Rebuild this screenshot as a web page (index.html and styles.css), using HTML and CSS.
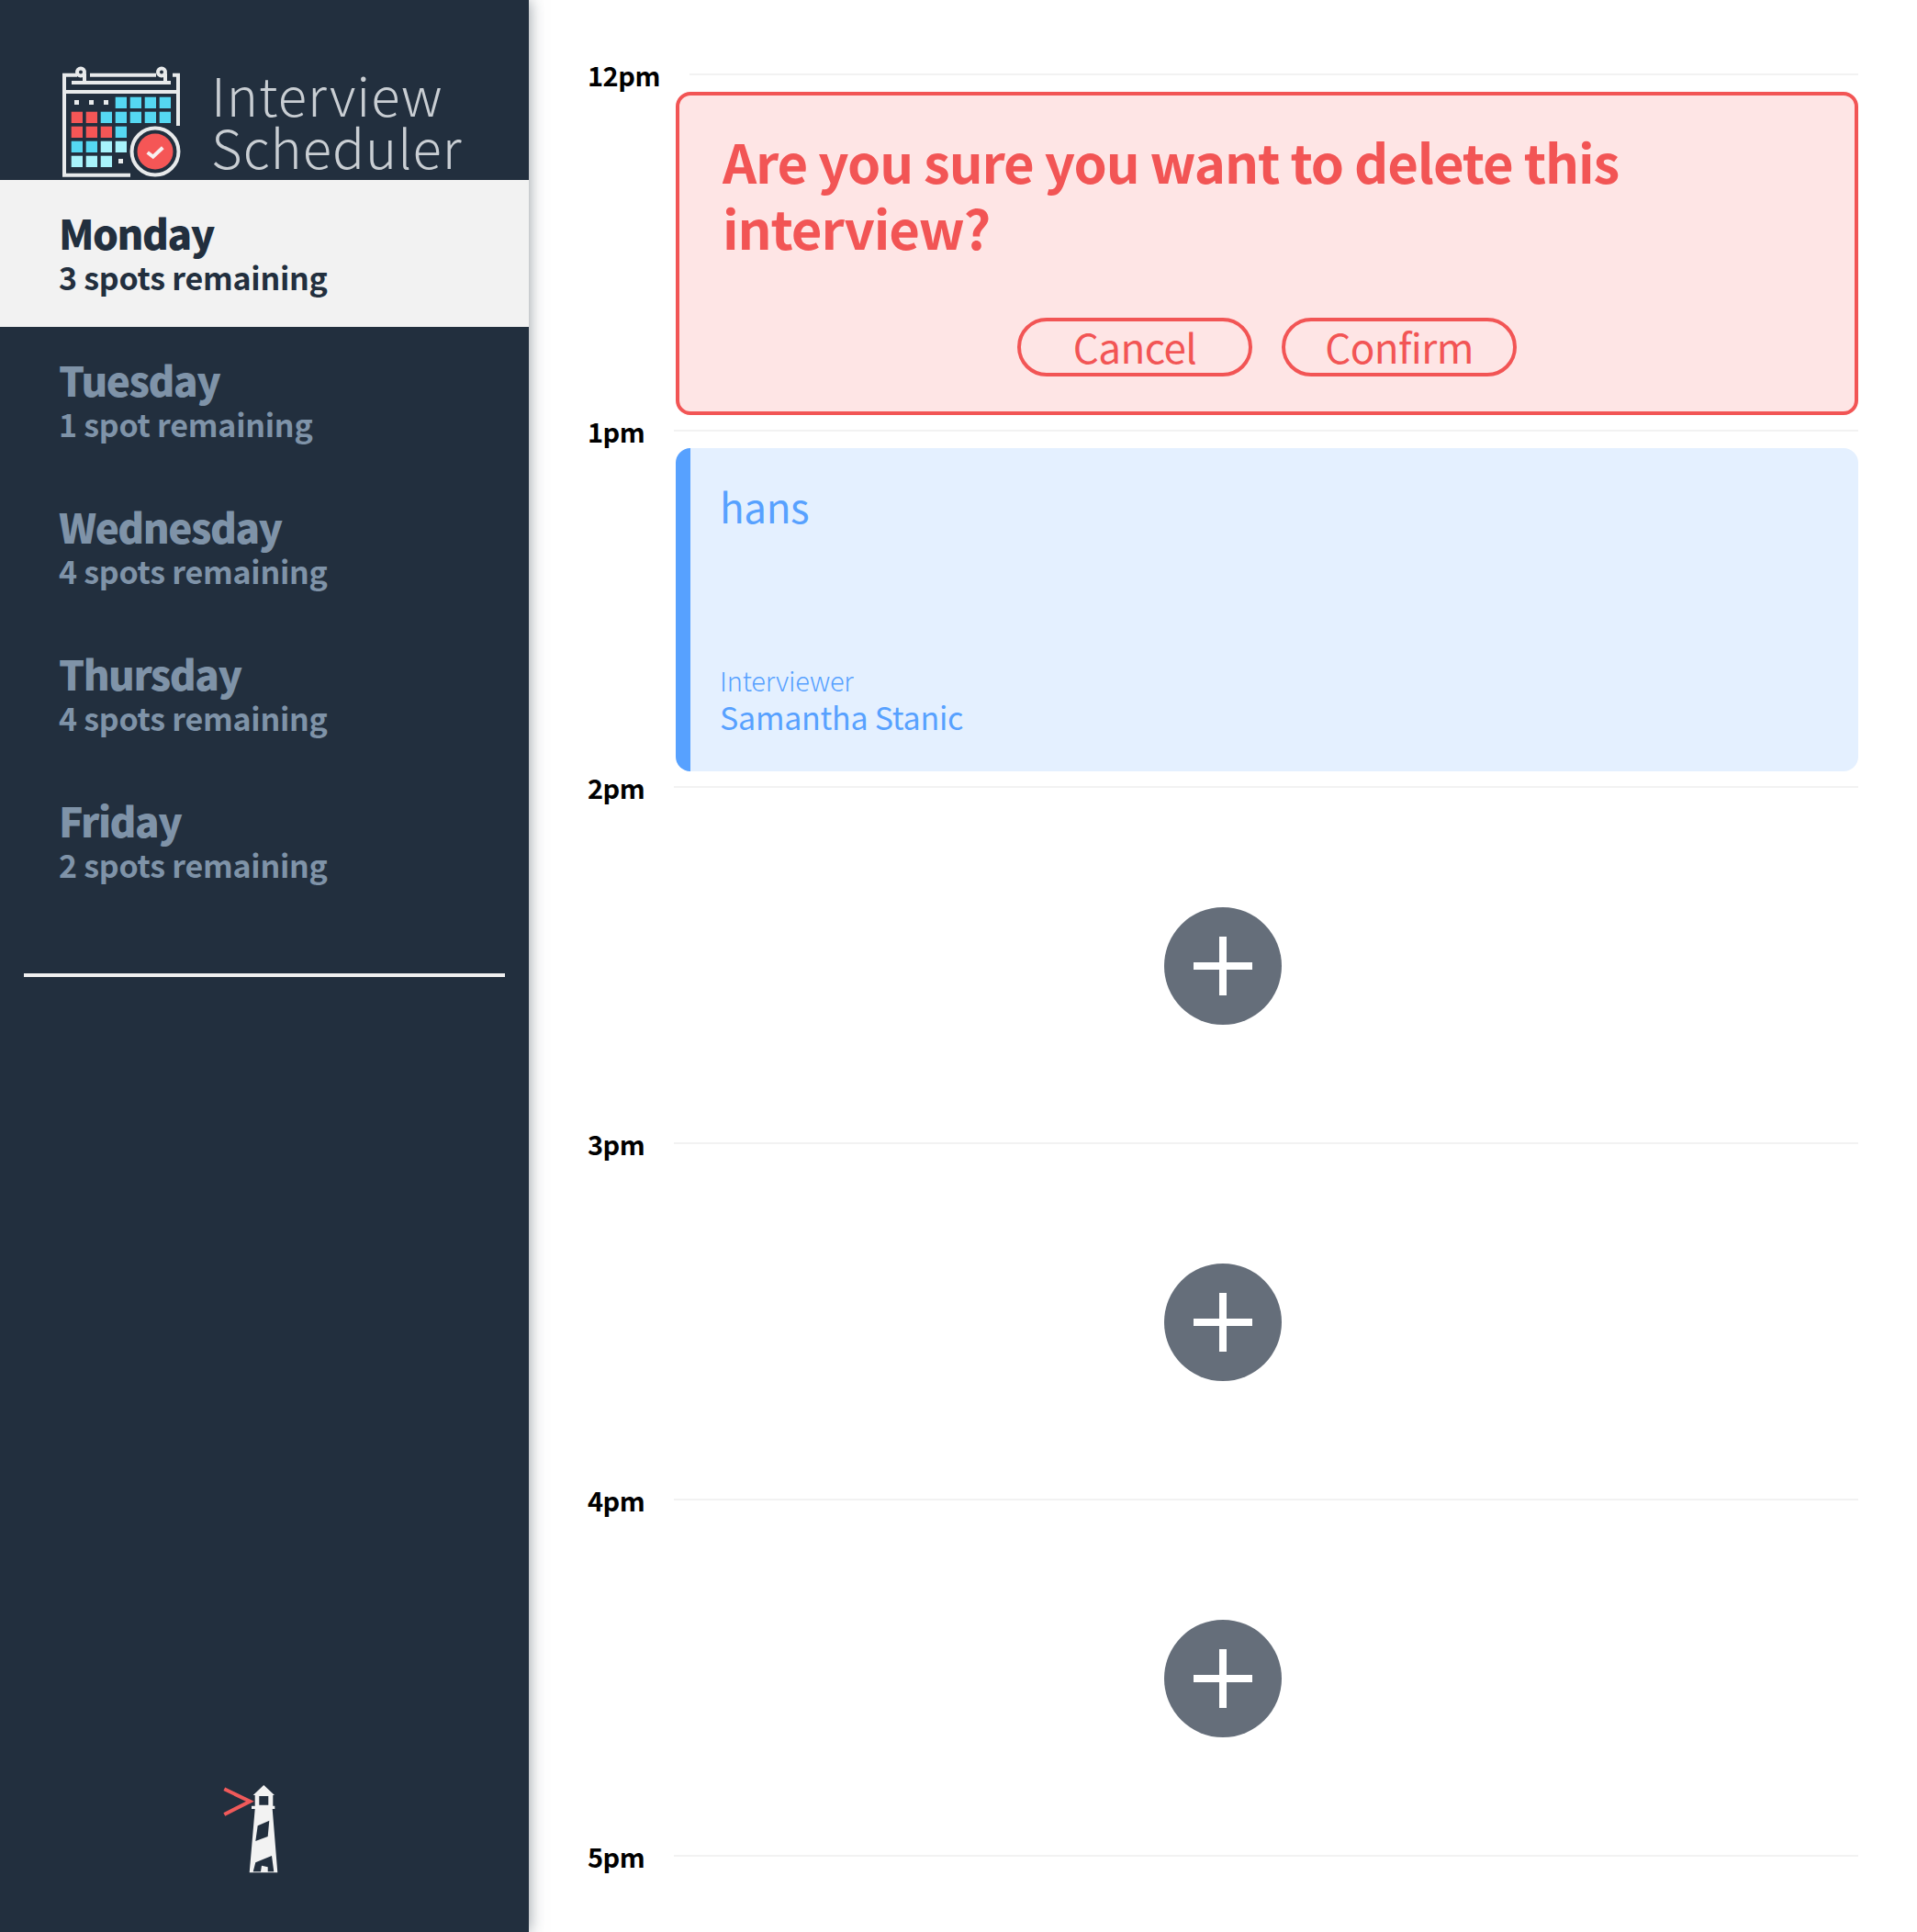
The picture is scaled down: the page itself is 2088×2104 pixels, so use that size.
FILE: index.html
```html
<!DOCTYPE html>
<html lang="en">
<head>
  <meta charset="UTF-8" />
  <meta name="viewport" content="width=device-width, initial-scale=1.0"/>
  <title>Interview Scheduler</title>
  <link rel="stylesheet" href="styles.css">
</head>
<body>
  <div class="layout">
    <aside class="sidebar">
      <div class="brand">
        <svg class="brand-icon" width="140" height="130" viewBox="0 0 140 130">
          <g fill="none" stroke="#e8eaeb" stroke-width="4">
            <path d="M24 11.7H10V120.7H82"/>
            <path d="M10 30H134"/>
            <path d="M128 11.7H134V67"/>
            <path d="M38 11.7H110"/>
            <path d="M18 20H126"/>
            <circle cx="28" cy="8.500" r="4"/>
            <circle cx="116" cy="8.500" r="4"/>
            <path d="M32 10V20M120 10V20"/>
            <circle cx="109" cy="95" r="25.5"/>
          </g>
          <g fill="#e8eaeb">
            <rect x="21" y="39" width="5" height="5"/>
            <rect x="37" y="39" width="5" height="5"/>
            <rect x="53" y="39" width="5" height="5"/>
            <rect x="69" y="103" width="5" height="5"/>
          </g>
          <g fill="#55d8f2">
            <rect x="65.700" y="35.700" width="12.300" height="12.300"/>
            <rect x="81.700" y="35.700" width="12.300" height="12.300"/>
            <rect x="97.700" y="35.700" width="12.300" height="12.300"/>
            <rect x="113.700" y="35.700" width="12.300" height="12.300"/>
            <rect x="49.700" y="51.700" width="12.300" height="12.300"/>
            <rect x="65.700" y="51.700" width="12.300" height="12.300"/>
            <rect x="81.700" y="51.700" width="12.300" height="12.300"/>
            <rect x="97.700" y="51.700" width="12.300" height="12.300"/>
            <rect x="113.700" y="51.700" width="12.300" height="12.300"/>
            <rect x="65.700" y="67.700" width="12.300" height="12.300"/>
            <rect x="17.700" y="83.700" width="12.300" height="12.300"/>
            <rect x="33.700" y="83.700" width="12.300" height="12.300"/>
          </g>
          <g fill="#f55656">
            <rect x="17.700" y="51.700" width="12.300" height="12.300"/>
            <rect x="33.700" y="51.700" width="12.300" height="12.300"/>
            <rect x="17.700" y="67.700" width="12.300" height="12.300"/>
            <rect x="33.700" y="67.700" width="12.300" height="12.300"/>
            <rect x="49.700" y="67.700" width="12.300" height="12.300"/>
            <circle cx="109" cy="95" r="19.500"/>
          </g>
          <g fill="#a8f3fb">
            <rect x="49.700" y="83.700" width="12.300" height="12.300"/>
            <rect x="65.700" y="83.700" width="12.300" height="12.300"/>
            <rect x="17.700" y="99.700" width="12.300" height="12.300"/>
            <rect x="33.700" y="99.700" width="12.300" height="12.300"/>
            <rect x="49.700" y="99.700" width="12.300" height="12.300"/>
          </g>
          <path d="M100.700 96L106.700 100.700L117.300 90.700" fill="none" stroke="#f7f0f0" stroke-width="4"/>
        </svg>
        <div class="brand-name">Interview<br>Scheduler</div>
      </div>

      <ul class="days">
        <li class="day day-selected">
          <h2>Monday</h2>
          <p>3 spots remaining</p>
        </li>
        <li class="day">
          <h2>Tuesday</h2>
          <p>1 spot remaining</p>
        </li>
        <li class="day">
          <h2>Wednesday</h2>
          <p>4 spots remaining</p>
        </li>
        <li class="day">
          <h2>Thursday</h2>
          <p>4 spots remaining</p>
        </li>
        <li class="day">
          <h2>Friday</h2>
          <p>2 spots remaining</p>
        </li>
      </ul>

      <div class="divider"></div>

      <svg class="lighthouse" width="70" height="100" viewBox="0 0 70 100">
        <path d="M4.300 8.300L32.300 21.700L4.300 36" fill="none" stroke="#f05a5a" stroke-width="4"/>
        <path fill="#f2f2f2" fill-rule="evenodd" d="M47.300 4L59 15H57.300V26.700H59.300V30H56.700L62.300 99.300H31.700L37.700 30H34V26.700H37.700V15H35.700ZM42.300 16V25.700H52.300V16Z"/>
        <path fill="#222f3e" d="M40.700 48.300L53.300 42.700L51.700 60L38.300 65Z"/>
        <path fill="#222f3e" d="M38.300 88.300L56 81L58.300 98.300H51.700V93.300L45 91.700L44 98.300H35.700Z"/>
      </svg>
    </aside>

    <main class="schedule">
      <article class="slot">
        <header class="slot-head">
          <span class="slot-time">12pm</span>
          <hr class="slot-line">
        </header>
        <form class="confirm">
          <h1>Are you sure you want to delete this interview?</h1>
          <div class="confirm-actions">
            <button type="button" class="btn">Cancel</button>
            <button type="button" class="btn">Confirm</button>
          </div>
        </form>
      </article>

      <article class="slot">
        <header class="slot-head">
          <span class="slot-time">1pm</span>
          <hr class="slot-line">
        </header>
        <div class="booked">
          <h2>hans</h2>
          <div class="booked-info">
            <h4>Interviewer</h4>
            <h3>Samantha Stanic</h3>
          </div>
        </div>
      </article>

      <article class="slot">
        <header class="slot-head">
          <span class="slot-time">2pm</span>
          <hr class="slot-line">
        </header>
        <div class="empty">
          <div class="add-btn"></div>
        </div>
      </article>

      <article class="slot">
        <header class="slot-head">
          <span class="slot-time">3pm</span>
          <hr class="slot-line">
        </header>
        <div class="empty">
          <div class="add-btn"></div>
        </div>
      </article>

      <article class="slot">
        <header class="slot-head">
          <span class="slot-time">4pm</span>
          <hr class="slot-line">
        </header>
        <div class="empty">
          <div class="add-btn"></div>
        </div>
      </article>

      <article class="slot">
        <header class="slot-head">
          <span class="slot-time">5pm</span>
          <hr class="slot-line">
        </header>
      </article>
    </main>
  </div>
</body>
</html>
```

FILE: styles.css
```css
body {
  margin: 0;
  font-family: 'Noto Sans CJK SC', 'Noto Sans', sans-serif;
  background: #fff;
  color: #000;
}

.layout {
  display: flex;
  height: 2104px;
  overflow: hidden;
}

.sidebar {
  width: 576px;
  flex-shrink: 0;
  background: #222f3e;
  box-shadow: 0 0 16px rgba(34,47,62,0.5);
  display: flex;
  flex-direction: column;
  position: relative;
}

.brand {
  height: 196px;
  box-sizing: border-box;
  padding: 70px 0 0 60px;
  display: flex;
  gap: 30px;
}

.brand-icon {
  flex-shrink: 0;
}

.brand-name {
  color: #c9ced3;
  font-size: 58px;
  font-weight: 200;
  line-height: 57px;
  letter-spacing: 1px;
  margin-top: 4px;
  white-space: nowrap;
}

.days {
  list-style: none;
  margin: 0;
  padding: 0;
}

.day {
  height: 160px;
  box-sizing: border-box;
  padding: 33px 64px 0;
  color: #7f93a8;
}

.day h2 {
  margin: 0;
  font-size: 44px;
  line-height: 48px;
  font-weight: 900;
  letter-spacing: -1.5px;
}

.day p {
  margin: 3px 0 0;
  font-size: 34px;
  line-height: 44px;
  font-weight: 700;
  letter-spacing: -0.25px;
}

.day-selected {
  background: #f2f2f2;
  color: #222f3e;
}

.divider {
  margin: 64px 26px 0;
  height: 4px;
  background: #f0f0f0;
}

.lighthouse {
  margin: auto 0 64px 240px;
  display: block;
}

.schedule {
  flex: 1;
  padding: 60px 64px 0;
}

.slot {
  height: 388px;
}

.slot-head {
  height: 40px;
  display: flex;
  align-items: center;
  gap: 32px;
}

.slot-time {
  font-size: 29px;
  line-height: 40px;
  font-weight: 700;
  letter-spacing: -0.5px;
  padding-top: 2px;
}

.slot-line {
  flex: 1;
  height: 2px;
  margin: 2px 0 0;
  border: none;
  background: #f2f2f2;
}

.confirm {
  margin-left: 96px;
  height: 352px;
  box-sizing: border-box;
  border: 4px solid #f25555;
  border-radius: 16px;
  background: #fee5e5;
  color: #f25555;
  padding: 35px 47px 0;
}

.confirm h1 {
  margin: 0;
  font-size: 58px;
  line-height: 72px;
  font-weight: 700;
  letter-spacing: -1.1px;
}

.confirm-actions {
  display: flex;
  justify-content: center;
  gap: 32px;
  margin-top: 63px;
}

.btn {
  width: 256px;
  height: 64px;
  padding: 0 0 7px;
  border: 4px solid #f25555;
  border-radius: 32px;
  background: none;
  color: #f25555;
  font-family: inherit;
  font-size: 44px;
  line-height: 54px;
  letter-spacing: -0.6px;
}

.booked {
  margin-left: 96px;
  height: 352px;
  box-sizing: border-box;
  border-left: 16px solid #57a1ff;
  border-radius: 16px;
  background: #e4f0ff;
  color: #57a1ff;
  padding: 33px 32px 0;
  display: flex;
  flex-direction: column;
  justify-content: space-between;
}

.booked h2 {
  margin: 0;
  font-size: 44px;
  line-height: 60px;
  font-weight: 400;
  letter-spacing: -0.4px;
}

.booked h3 {
  margin: 3px 0 0;
  font-size: 34px;
  line-height: 40px;
  font-weight: 400;
  letter-spacing: -0.25px;
}

.booked h4 {
  margin: 0;
  font-size: 29px;
  line-height: 36px;
  font-weight: 300;
  letter-spacing: -0.2px;
}

.booked-info {
  padding-bottom: 39px;
}

.empty {
  height: 352px;
  display: flex;
  align-items: center;
  justify-content: center;
}

.add-btn {
  width: 128px;
  height: 128px;
  border-radius: 50%;
  background: #656e7a;
  position: relative;
}

.add-btn::before,
.add-btn::after {
  content: '';
  position: absolute;
  background: #fff;
}

.add-btn::before {
  left: 32px;
  top: 60px;
  width: 64px;
  height: 8px;
}

.add-btn::after {
  left: 60px;
  top: 32px;
  width: 8px;
  height: 64px;
}
```
